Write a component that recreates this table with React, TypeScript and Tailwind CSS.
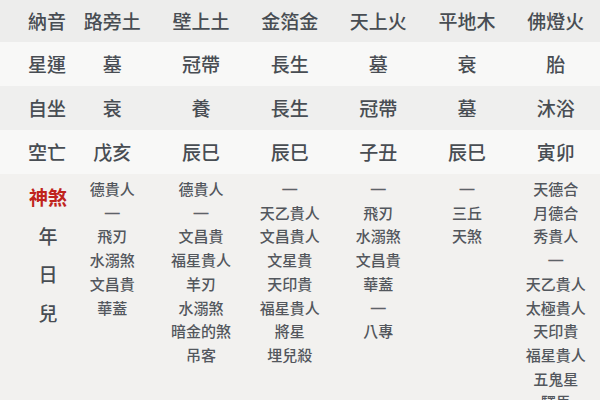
const font = { fontFamily: '"Noto Sans CJK TC", "Noto Sans CJK SC", sans-serif' };

const header = ['納音', '路旁土', '壁上土', '金箔金', '天上火', '平地木', '佛燈火'];

const rows = [
  { cells: ['星運', '墓', '冠帶', '長生', '墓', '衰', '胎'], bg: 'bg-[#f8f8f7]' },
  { cells: ['自坐', '衰', '養', '長生', '冠帶', '墓', '沐浴'], bg: 'bg-[#efefee]' },
  { cells: ['空亡', '戊亥', '辰巳', '辰巳', '子丑', '辰巳', '寅卯'], bg: 'bg-[#f8f8f7]' },
];

const stars = [
  ['德貴人', '—', '飛刃', '水溺煞', '文昌貴', '華蓋'],
  ['德貴人', '—', '文昌貴', '福星貴人', '羊刃', '水溺煞', '暗金的煞', '吊客'],
  ['—', '天乙貴人', '文昌貴人', '文星貴', '天印貴', '福星貴人', '將星', '埋兒殺'],
  ['—', '飛刃', '水溺煞', '文昌貴', '華蓋', '—', '八專'],
  ['—', '三丘', '天煞'],
  ['天德合', '月德合', '秀貴人', '—', '天乙貴人', '太極貴人', '天印貴', '福星貴人', '五鬼星', '驛馬'],
];

function Row({ cells, bg, h }: { cells: string[]; bg: string; h: string }) {
  return (
    <div className={`grid grid-cols-[68px_repeat(6,1fr)] items-center ${bg} ${h}`}>
      <div className="pl-[28px] whitespace-nowrap">{cells[0]}</div>
      {cells.slice(1).map((c, i) => (
        <div key={i} className="text-center whitespace-nowrap">
          {c}
        </div>
      ))}
    </div>
  );
}

export default function App() {
  return (
    <div className="h-[400px] w-[600px] overflow-hidden bg-[#f2f1ef] text-[#484d53]" style={font}>
      <div className="text-[19px] font-medium">
        <Row cells={header} bg="bg-[#ededec]" h="h-[42px]" />
        {rows.map((r, i) => (
          <Row key={i} cells={r.cells} bg={r.bg} h="h-[44px]" />
        ))}
      </div>
      <div className="grid grid-cols-[68px_repeat(6,1fr)] bg-[#f2f1ef]">
        <div className="ml-[28px] flex w-[40px] flex-col items-center pt-[4px] text-[19px] font-medium leading-[38.5px]">
          <div className="whitespace-nowrap font-bold text-[#c0241c]">神煞</div>
          <div>年</div>
          <div>日</div>
          <div>兒</div>
        </div>
        {stars.map((col, i) => (
          <div key={i} className="flex flex-col items-center pt-[3px] text-[15px] font-medium leading-[23.7px] text-[#53575d]">
            {col.map((s, j) =>
              s === '—' ? (
                <div key={j} className="font-['Liberation_Sans',sans-serif] font-bold text-[#5e6268]">
                  {s}
                </div>
              ) : (
                <div key={j} className="whitespace-nowrap">
                  {s}
                </div>
              ),
            )}
          </div>
        ))}
      </div>
    </div>
  );
}
